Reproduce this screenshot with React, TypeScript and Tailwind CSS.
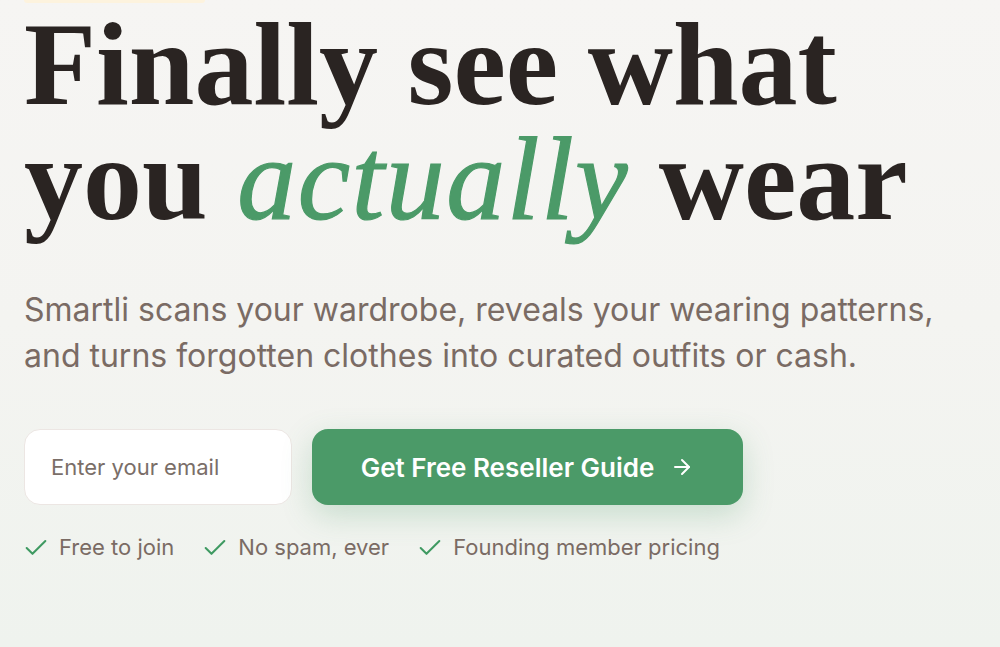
import { ArrowRight, Check } from "lucide-react";

const perks = ["Free to join", "No spam, ever", "Founding member pricing"];

export default function App() {
  return (
    <main className="min-h-[647px] w-full overflow-hidden bg-gradient-to-b from-[#f6f5f3] via-[#f4f4f1] to-[#eff3ee] font-['Inter',sans-serif]">
      <section className="px-6">
        <div className="h-[3px] w-[181px] rounded-b-md bg-[#fdf3de]" />
        <h1 className="mt-[4px] font-['Liberation_Serif',serif] text-[118px] leading-[115px] font-bold text-[#2a2422]">
          Finally see what
          <br />
          you{" "}
          <em className="font-normal tracking-[1.5px] text-[#4b9a68] [-webkit-text-stroke:1.2px_#4b9a68]">
            actually
          </em>{" "}
          wear
        </h1>
        <p className="mt-[50px] text-[32px] leading-[46px] text-[#7a6b64]">
          Smartli scans your wardrobe, reveals your wearing patterns,
          <br />
          and turns forgotten clothes into curated outfits or cash.
        </p>
        <form className="mt-[50px] flex gap-5" onSubmit={(e) => e.preventDefault()}>
          <input
            type="email"
            placeholder="Enter your email"
            className="h-[76px] w-[268px] rounded-2xl border border-[#ece6e3] bg-white px-[26px] text-[22px] text-[#2a2422] outline-none placeholder:text-[#7a6e68]"
          />
          <button
            type="submit"
            className="flex h-[76px] w-[431px] items-center justify-center gap-4 rounded-2xl bg-[#4b9a68] text-[26px] font-semibold text-white shadow-[0_10px_30px_rgba(75,154,104,0.25)]"
          >
            Get Free Reseller Guide
            <ArrowRight className="h-6 w-6" strokeWidth={2} />
          </button>
        </form>
        <ul className="mt-[26px] flex gap-[27px] text-[22px] text-[#7a6b64]">
          {perks.map((p) => (
            <li key={p} className="flex items-center gap-[9px] first:-ml-[2px]">
              <Check className="h-7 w-7 text-[#3f9a62]" strokeWidth={1.75} />
              {p}
            </li>
          ))}
        </ul>
      </section>
    </main>
  );
}
